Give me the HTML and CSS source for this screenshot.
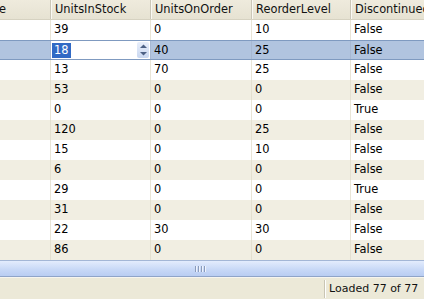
FILE: index.html
```html
<!DOCTYPE html>
<html>
<head>
<meta charset="utf-8">
<link rel="stylesheet" href="styles.css">
</head>
<body>
<div class="window">
  <div class="grid-viewport">
    <div class="grid">
      <div class="row header">
        <div class="cell">UnitPrice</div>
        <div class="cell">UnitsInStock</div>
        <div class="cell">UnitsOnOrder</div>
        <div class="cell">ReorderLevel</div>
        <div class="cell">Discontinued</div>
      </div>
      <div class="row odd"><div class="cell"></div><div class="cell">39</div><div class="cell">0</div><div class="cell">10</div><div class="cell">False</div></div>
      <div class="row selected">
        <div class="cell"></div>
        <div class="cell editor"><span class="sel-text">18</span>
          <span class="spin">
            <svg width="9" height="14" viewBox="0 0 9 14"><path d="M1 5 L4.5 1.5 L8 5 Z" fill="#4d6185"/><path d="M1 9 L4.5 12.5 L8 9 Z" fill="#4d6185"/></svg>
          </span>
        </div>
        <div class="cell">40</div><div class="cell">25</div><div class="cell">False</div>
      </div>
      <div class="row odd"><div class="cell"></div><div class="cell">13</div><div class="cell">70</div><div class="cell">25</div><div class="cell">False</div></div>
      <div class="row even"><div class="cell"></div><div class="cell">53</div><div class="cell">0</div><div class="cell">0</div><div class="cell">False</div></div>
      <div class="row odd"><div class="cell"></div><div class="cell">0</div><div class="cell">0</div><div class="cell">0</div><div class="cell">True</div></div>
      <div class="row even"><div class="cell"></div><div class="cell">120</div><div class="cell">0</div><div class="cell">25</div><div class="cell">False</div></div>
      <div class="row odd"><div class="cell"></div><div class="cell">15</div><div class="cell">0</div><div class="cell">10</div><div class="cell">False</div></div>
      <div class="row even"><div class="cell"></div><div class="cell">6</div><div class="cell">0</div><div class="cell">0</div><div class="cell">False</div></div>
      <div class="row odd"><div class="cell"></div><div class="cell">29</div><div class="cell">0</div><div class="cell">0</div><div class="cell">True</div></div>
      <div class="row even"><div class="cell"></div><div class="cell">31</div><div class="cell">0</div><div class="cell">0</div><div class="cell">False</div></div>
      <div class="row odd"><div class="cell"></div><div class="cell">22</div><div class="cell">30</div><div class="cell">30</div><div class="cell">False</div></div>
      <div class="row even"><div class="cell"></div><div class="cell">86</div><div class="cell">0</div><div class="cell">0</div><div class="cell">False</div></div>
    </div>
  </div>
  <div class="hscroll">
    <div class="grip"><i></i><i></i><i></i><i></i></div>
  </div>
  <div class="statusbar">
    <div class="status-spacer"></div>
    <div class="status-panel">Loaded 77 of 77</div>
  </div>
</div>
</body>
</html>
```
FILE: styles.css
```css
html, body {
  margin: 0;
  padding: 0;
  background: #ffffff;
}
.window {
  width: 424px;
  height: 299px;
  display: flex;
  flex-direction: column;
  overflow: hidden;
  font-family: "DejaVu Sans", Verdana, sans-serif;
  font-size: 11.4px;
  color: #000;
}
.grid-viewport {
  height: 260px;
  overflow: hidden;
  flex: none;
}
.grid {
  margin-left: -49px;
  width: 520px;
}
.row {
  display: grid;
  grid-template-columns: 100px 100px 101px 99px 121px;
  height: 20px;
}
.cell {
  box-sizing: border-box;
  border-right: 1px solid #e9e5d7;
  padding: 0 0 0 3px;
  line-height: 19px;
  white-space: nowrap;
  overflow: hidden;
}
.header {
  background: linear-gradient(#efebdd, #e6e2d2);
  border-bottom: 1px solid #d6d2c1;
  height: 20px;
  box-sizing: border-box;
}
.header .cell {
  border-right: 1px solid #cbc7b8;
  box-shadow: inset 1px 0 0 #faf9f4;
  color: #111;
  padding-left: 4px;
}
.odd { background: #ffffff; }
.even { background: #f1eee2; }
.even .cell { border-right-color: #e4e0d0; }
.selected {
  background: #b1c4df;
  box-sizing: border-box;
  border-top: 1px solid #7f9ac0;
  border-bottom: 1px solid #7f9ac0;
}
.selected .cell {
  line-height: 18px;
  border-right-color: #a7b8d2;
}
.editor {
  background: #fff;
  display: flex;
  align-items: center;
  justify-content: space-between;
  padding-left: 1px;
  padding-right: 1px;
}
.sel-text {
  background: #316ac5;
  color: #fff;
  padding: 0 2px;
  line-height: 15px;
}
.spin {
  width: 12px;
  height: 16px;
  display: flex;
  align-items: center;
  justify-content: center;
  background: linear-gradient(#e9effb, #c9d7f0);
  border-radius: 2px;
}
.hscroll {
  height: 17px;
  flex: none;
  box-sizing: border-box;
  border-top: 1px solid #a3b6d6;
  border-bottom: 1px solid #8fa4c8;
  background: linear-gradient(#e3ecfd, #c6d7f6 60%, #b9cdf2);
  display: flex;
  align-items: center;
  justify-content: center;
}
.grip {
  display: flex;
  gap: 1px;
  margin-left: -24px;
}
.grip i {
  display: block;
  width: 1px;
  height: 6px;
  background: #8a9bbb;
  border-right: 1px solid #eef3fd;
}
.statusbar {
  flex: 1;
  background: #ece9d8;
  border-top: 1px solid #f7f5ee;
  display: flex;
  align-items: center;
}
.status-spacer {
  flex: 1;
}
.status-panel {
  width: 100px;
  box-sizing: border-box;
  border-left: 1px solid #c9c5b4;
  box-shadow: inset 1px 0 0 #fff;
  padding-left: 4px;
  height: 18px;
  line-height: 18px;
  font-size: 11px;
  white-space: nowrap;
  color: #111;
}
```
